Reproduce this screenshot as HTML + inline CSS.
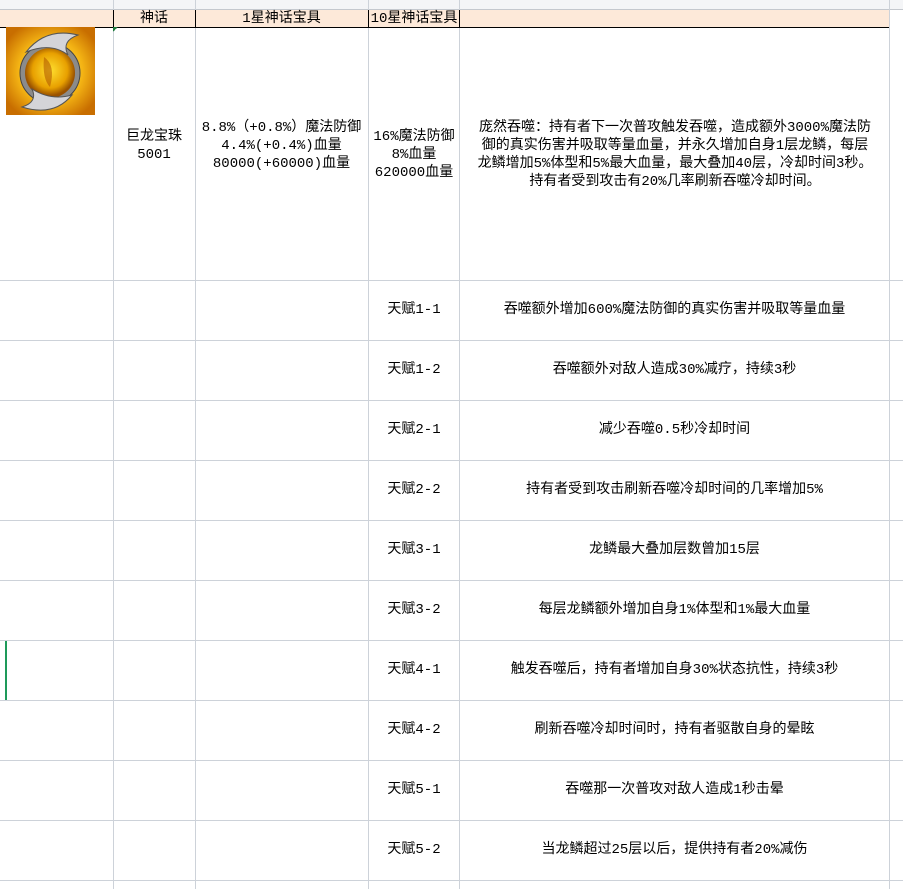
<!DOCTYPE html><html><head><meta charset="utf-8"><style>
body{margin:0;width:903px;height:889px;overflow:hidden;background:#fff;font-family:"Liberation Mono","Noto Sans CJK SC",monospace;font-size:14px;color:#000;position:relative}
.a{position:absolute}
.v{position:absolute;top:0;width:1px;height:889px;background:#cdd2d9}
.h{position:absolute;left:0;width:903px;height:1px;background:#cdd2d9}
.c{position:absolute;display:flex;align-items:center;justify-content:center;text-align:center;line-height:18px;white-space:nowrap}
</style></head><body>
<div class="a" style="left:0;top:0;width:903px;height:9px;background:#f4f5f7;border-bottom:1px solid #c4c8ce"></div>
<div class="a" style="left:0;top:10px;width:889px;height:17px;background:#fde9d9;border-bottom:1px solid #000;border-right:1px solid #000"></div>
<div class="v" style="left:113px"></div><div class="v" style="left:195px"></div><div class="v" style="left:368px"></div><div class="v" style="left:459px"></div><div class="v" style="left:889px"></div>
<div class="a" style="left:113px;top:10px;width:1px;height:18px;background:#000"></div>
<div class="a" style="left:195px;top:10px;width:1px;height:18px;background:#000"></div>
<div class="a" style="left:368px;top:10px;width:1px;height:18px;background:#000"></div>
<div class="a" style="left:459px;top:10px;width:1px;height:18px;background:#000"></div>
<div class="a" style="left:52px;top:-12px;color:#444">A</div><div class="a" style="left:151px;top:-12px;color:#444">B</div><div class="a" style="left:278px;top:-12px;color:#444">C</div><div class="a" style="left:410px;top:-12px;color:#444">D</div><div class="a" style="left:672px;top:-12px;color:#444">E</div>
<div class="c" style="left:113px;top:9px;width:82px;height:19px">神话</div>
<div class="c" style="left:195px;top:9px;width:173px;height:19px">1星神话宝具</div>
<div class="c" style="left:368px;top:9px;width:92px;height:19px">10星神话宝具</div>
<svg class="a" style="left:6px;top:27px" width="89" height="88" viewBox="0 0 89 88">
<defs><radialGradient id="g" cx="50%" cy="50%" r="60%"><stop offset="0" stop-color="#fff06a"/><stop offset=".6" stop-color="#f4b414"/><stop offset="1" stop-color="#c86e00"/></radialGradient><radialGradient id="o" cx="50%" cy="45%" r="50%"><stop offset="0" stop-color="#ffe030"/><stop offset=".7" stop-color="#e8a000"/><stop offset="1" stop-color="#9a5200"/></radialGradient></defs>
<rect width="89" height="88" fill="url(#g)"/>
<circle cx="44" cy="46" r="30" fill="#8b8b8b" stroke="#444"/><circle cx="44" cy="46" r="25" fill="url(#o)"/>
<path d="M38 30 Q50 38 44 60 Q36 52 38 30Z" fill="#b35a00" opacity=".6"/>
<path d="M20 25 Q40 0 72 8 Q55 14 62 28 Q45 15 20 25Z" fill="#d4d4d8" stroke="#555"/>
<path d="M66 68 Q48 90 16 80 Q32 75 26 62 Q45 74 66 68Z" fill="#d4d4d8" stroke="#555"/>
</svg>
<div class="a" style="left:113px;top:27px;width:5px;height:5px;background:linear-gradient(135deg,#1e7a3c 50%,transparent 50%)"></div>
<div class="h" style="top:280px"></div>
<div class="c" style="left:113px;top:28px;width:82px;height:236px">巨龙宝珠<br>5001</div>
<div class="c" style="left:195px;top:28px;width:173px;height:236px">8.8%（+0.8%）魔法防御<br>4.4%(+0.4%)血量<br>80000(+60000)血量</div>
<div class="c" style="left:368px;top:28px;width:92px;height:254px">16%魔法防御<br>8%血量<br>620000血量</div>
<div class="c" style="left:462px;top:28px;width:426px;height:254px">庞然吞噬：持有者下一次普攻触发吞噬，造成额外3000%魔法防<br>御的真实伤害并吸取等量血量，并永久增加自身1层龙鳞，每层<br>龙鳞增加5%体型和5%最大血量，最大叠加40层，冷却时间3秒。<br>持有者受到攻击有20%几率刷新吞噬冷却时间。</div>
<div class="h" style="top:340px"></div><div class="h" style="top:400px"></div><div class="h" style="top:460px"></div><div class="h" style="top:520px"></div><div class="h" style="top:580px"></div><div class="h" style="top:640px"></div><div class="h" style="top:700px"></div><div class="h" style="top:760px"></div><div class="h" style="top:820px"></div><div class="h" style="top:880px"></div>
<div class="a" style="left:5px;top:641px;width:2px;height:59px;background:#1e9a5a"></div>
<div class="c" style="left:368px;top:280px;width:92px;height:60px">天赋1-1</div><div class="c" style="left:460px;top:280px;width:429px;height:60px">吞噬额外增加600%魔法防御的真实伤害并吸取等量血量</div>
<div class="c" style="left:368px;top:340px;width:92px;height:60px">天赋1-2</div><div class="c" style="left:460px;top:340px;width:429px;height:60px">吞噬额外对敌人造成30%减疗，持续3秒</div>
<div class="c" style="left:368px;top:400px;width:92px;height:60px">天赋2-1</div><div class="c" style="left:460px;top:400px;width:429px;height:60px">减少吞噬0.5秒冷却时间</div>
<div class="c" style="left:368px;top:460px;width:92px;height:60px">天赋2-2</div><div class="c" style="left:460px;top:460px;width:429px;height:60px">持有者受到攻击刷新吞噬冷却时间的几率增加5%</div>
<div class="c" style="left:368px;top:520px;width:92px;height:60px">天赋3-1</div><div class="c" style="left:460px;top:520px;width:429px;height:60px">龙鳞最大叠加层数曾加15层</div>
<div class="c" style="left:368px;top:580px;width:92px;height:60px">天赋3-2</div><div class="c" style="left:460px;top:580px;width:429px;height:60px">每层龙鳞额外增加自身1%体型和1%最大血量</div>
<div class="c" style="left:368px;top:640px;width:92px;height:60px">天赋4-1</div><div class="c" style="left:460px;top:640px;width:429px;height:60px">触发吞噬后，持有者增加自身30%状态抗性，持续3秒</div>
<div class="c" style="left:368px;top:700px;width:92px;height:60px">天赋4-2</div><div class="c" style="left:460px;top:700px;width:429px;height:60px">刷新吞噬冷却时间时，持有者驱散自身的晕眩</div>
<div class="c" style="left:368px;top:760px;width:92px;height:60px">天赋5-1</div><div class="c" style="left:460px;top:760px;width:429px;height:60px">吞噬那一次普攻对敌人造成1秒击晕</div>
<div class="c" style="left:368px;top:820px;width:92px;height:60px">天赋5-2</div><div class="c" style="left:460px;top:820px;width:429px;height:60px">当龙鳞超过25层以后，提供持有者20%减伤</div>
</body></html>
